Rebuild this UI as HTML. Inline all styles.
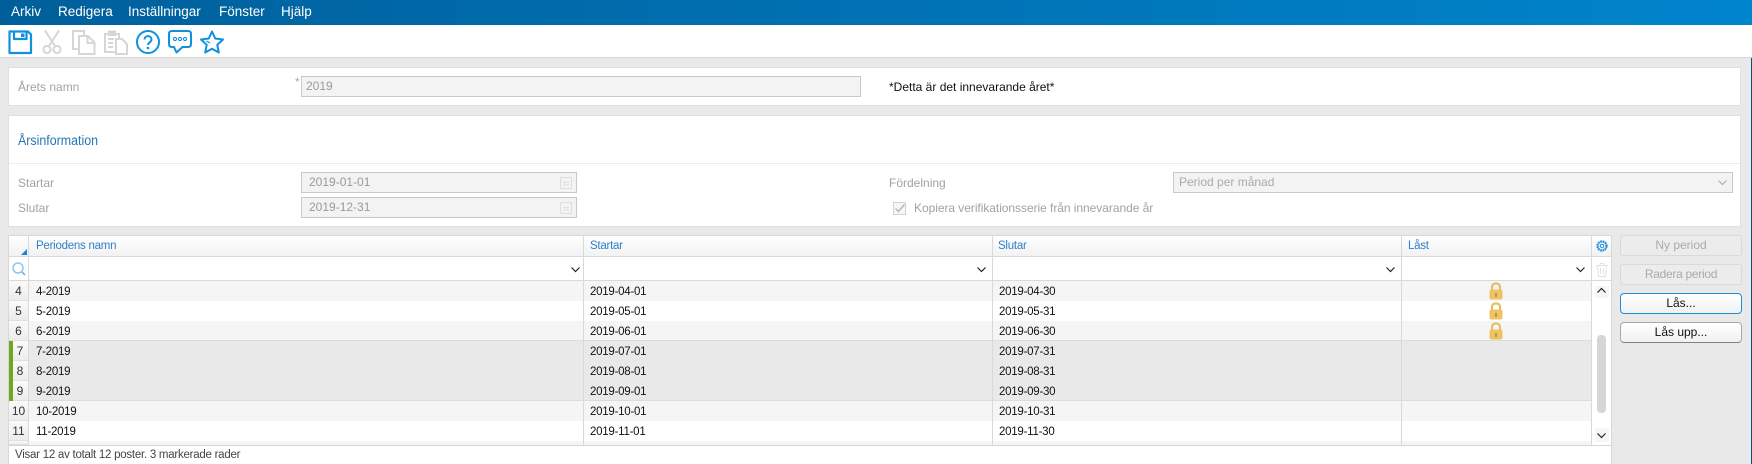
<!DOCTYPE html>
<html lang="sv"><head><meta charset="utf-8"><title>Årsinformation</title>
<style>
html,body{margin:0;padding:0}
body{width:1752px;height:464px;overflow:hidden;background:#e9e9e9;position:relative;font:12px/16px "Liberation Sans",sans-serif;color:#111}
.box{position:absolute;box-sizing:border-box}
.t{position:absolute;white-space:nowrap;line-height:16px}
.n{font-size:11.5px;letter-spacing:-.25px}
.lbl{color:#a2a2a2}
.inp{position:absolute;box-sizing:border-box;background:#f3f3f3;border:1px solid #c8c8c8;color:#9a9a9a;line-height:19px}
.btn{position:absolute;box-sizing:border-box;left:1620px;width:122px;height:21px;border-radius:3px;text-align:center;line-height:19px}
.off{background:#ececec;border:1px solid #d9d9d9;color:#aaa}
.on{background:linear-gradient(#fff,#f1f1f1);border:1px solid #a8a8a8;border-bottom-color:#808080;color:#111}
.rn{position:absolute;left:9px;width:19px;height:20px;box-sizing:border-box;background:linear-gradient(#fafafa,#ececec);text-align:center;line-height:21px;color:#333;border-bottom:1px solid #e0e0e0}
.row{position:absolute;left:29px;width:1562px;height:20px;font-size:11.5px;letter-spacing:-.25px}
.c{position:absolute;top:3px;white-space:nowrap}
.vl{position:absolute;width:1px;background:#d9d9d9}
svg{position:absolute;overflow:visible}
</style></head><body>

<div class="box" style="left:0;top:0;width:1752px;height:25px;background:linear-gradient(90deg,#005f9b,#0084cc)"></div>
<div class="t" style="left:11px;top:4px;color:#fff;font-size:13.5px">Arkiv</div>
<div class="t" style="left:58px;top:4px;color:#fff;font-size:13.5px">Redigera</div>
<div class="t" style="left:128px;top:4px;color:#fff;font-size:13.5px">Inställningar</div>
<div class="t" style="left:219px;top:4px;color:#fff;font-size:13.5px">Fönster</div>
<div class="t" style="left:281px;top:4px;color:#fff;font-size:13.5px">Hjälp</div>

<div class="box" style="left:0;top:25px;width:1752px;height:33px;background:#fff;border-bottom:1px solid #d8d8d8"></div>
<div class="box" style="left:1751px;top:58px;width:1px;height:406px;background:#0b4f7a"></div>

<!-- save -->
<svg style="left:8px;top:30px" width="24" height="24" viewBox="0 0 24 24" fill="none" stroke="#1190dd" stroke-width="2.2" stroke-linejoin="round"><path d="M1.500 1.500H20L23 4.500V23H1.500Z"/><path d="M6 1.500V9H18.500V1.500"/><path d="M13 3.500H16.500V7H13Z" fill="#1190dd" stroke="none"/></svg>
<!-- scissors -->
<svg style="left:42px;top:30px" width="20" height="24" viewBox="0 0 20 24" fill="none" stroke="#d6d6d6" stroke-width="2"><path d="M3 0.500L13 16M17 0.500L7 16"/><circle cx="5" cy="19.500" r="3.600"/><circle cx="15" cy="19.500" r="3.600"/></svg>
<!-- copy -->
<svg style="left:72px;top:30px" width="24" height="25" viewBox="0 0 24 25" fill="none" stroke="#d6d6d6" stroke-width="2"><path d="M1 1H12V19H1Z"/><path d="M7 6H16L22.500 12.500V24H7Z" fill="#fff"/><path d="M15.500 6V13H22.500"/></svg>
<!-- paste -->
<svg style="left:104px;top:30px" width="25" height="25" viewBox="0 0 25 25" fill="none" stroke="#d6d6d6" stroke-width="2"><path d="M1 4H15V22H1Z"/><path d="M5 1.500H11V5H5Z" fill="#d6d6d6"/><path d="M4 9H10M4 13H9M4 17H9"/><path d="M12 9H18L23 14V24H12Z" fill="#fff"/></svg>
<!-- help -->
<svg style="left:136px;top:30px" width="24" height="24" viewBox="0 0 24 24" fill="none" stroke="#1190dd"><circle cx="12" cy="12" r="11" stroke-width="2"/><path d="M8.500 9.500C8.500 5 15.500 5 15.500 9.500C15.500 12.300 12 12.500 12 15" stroke-width="2"/><circle cx="12" cy="18" r="1.300" fill="#1190dd" stroke="none"/></svg>
<!-- chat -->
<svg style="left:168px;top:30px" width="24" height="24" viewBox="0 0 24 24" fill="none" stroke="#1190dd" stroke-width="2" stroke-linejoin="round"><path d="M4 1H20Q23 1 23 4V14Q23 17 20 17H14.500L8.500 22.500L6 17H4Q1 17 1 14V4Q1 1 4 1Z"/><circle cx="7" cy="9" r="1.600" stroke-width="1.100"/><circle cx="12" cy="9" r="1.600" stroke-width="1.100"/><circle cx="17" cy="9" r="1.600" stroke-width="1.100"/></svg>
<!-- star -->
<svg style="left:200px;top:30px" width="24" height="24" viewBox="0 0 24 24" fill="none" stroke="#1190dd" stroke-width="2" stroke-linejoin="round"><path d="M12 1.500L15.200 8.500L23 9.500L17.300 14.800L18.800 22.500L12 18.700L5.200 22.500L6.700 14.800L1 9.500L8.800 8.500Z"/><path d="M6.500 11L10 13" stroke-width="1.200"/></svg>

<!-- panel 1 -->
<div class="box" style="left:8px;top:67px;width:1733px;height:39px;background:#fff;border:1px solid #e0e0e0"></div>
<div class="t lbl" style="left:18px;top:79px">Årets namn</div>
<div class="t" style="left:295px;top:74px;color:#aaa">*</div>
<div class="inp" style="left:301px;top:76px;width:560px;height:21px;padding-left:4px">2019</div>
<div class="t" style="left:889px;top:79px;color:#111">*Detta är det innevarande året*</div>

<!-- panel 2 -->
<div class="box" style="left:8px;top:115px;width:1733px;height:112px;background:#fff;border:1px solid #e0e0e0"></div>
<div class="box" style="left:9px;top:163px;width:1731px;height:1px;background:#ececec"></div>
<div class="t" style="left:18px;top:132px;font-size:13.5px;line-height:18px;color:#2676b4;transform:scaleX(.92);transform-origin:0 0">Årsinformation</div>
<div class="t lbl" style="left:18px;top:175px">Startar</div>
<div class="t lbl" style="left:18px;top:200px">Slutar</div>
<div class="inp" style="left:301px;top:172px;width:276px;height:21px;padding-left:7px">2019-01-01</div>
<div class="inp" style="left:301px;top:197px;width:276px;height:21px;padding-left:7px">2019-12-31</div>
<svg style="left:560px;top:176px" width="12" height="13" fill="none" stroke="#dedede"><path d="M.5 1.500H11.500V12.500H.5ZM3 6.500H9M3 9H9" /></svg>
<svg style="left:560px;top:201px" width="12" height="13" fill="none" stroke="#dedede"><path d="M.5 1.500H11.500V12.500H.5ZM3 6.500H9M3 9H9" /></svg>
<div class="t lbl" style="left:889px;top:175px">Fördelning</div>
<div class="inp" style="left:1173px;top:172px;width:560px;height:21px;padding-left:5px;color:#aaa">Period per månad</div>
<svg style="left:1718px;top:180px" width="9" height="6" fill="none" stroke="#a8a8a8" stroke-width="1"><path d="M.5 .5L4.500 4.500L8.500 .5"/></svg>
<div class="box" style="left:893px;top:202px;width:13px;height:13px;border:1px solid #d2d2d2;background:#f6f6f6"></div>
<svg style="left:895px;top:204px" width="10" height="9" fill="none" stroke="#b5b5b5" stroke-width="1.400"><path d="M.5 4.500L3.500 7.500L9.500 .5"/></svg>
<div class="t lbl" style="left:914px;top:200px;letter-spacing:-.05px">Kopiera verifikationsserie från innevarande år</div>

<!-- table -->
<div class="box" style="left:8px;top:235px;width:1604px;height:229px;background:#fff;border:1px solid #d8d8d8;border-bottom:none"></div>
<div class="box" style="left:9px;top:236px;width:1602px;height:20px;background:linear-gradient(#fff,#f2f2f2)"></div>
<div class="box" style="left:9px;top:256px;width:1602px;height:1px;background:#d9d9d9"></div>
<div class="box" style="left:9px;top:280px;width:1602px;height:1px;background:#d9d9d9"></div>
<svg style="left:21px;top:249px" width="6" height="6"><path d="M6 0V6H0Z" fill="#1a86d0"/></svg>
<div class="t n" style="left:36px;top:238px;color:#2f80c8">Periodens namn</div>
<div class="t n" style="left:590px;top:238px;color:#2f80c8">Startar</div>
<div class="t n" style="left:998px;top:238px;color:#2f80c8">Slutar</div>
<div class="t n" style="left:1408px;top:238px;color:#2f80c8">Låst</div>

<!-- gear -->
<svg style="left:1596px;top:240px" width="12" height="12" viewBox="0 0 12 12" fill="none" stroke="#1c8fdc"><circle cx="6" cy="6" r="4.500" stroke-width="2.200" stroke-dasharray="1.800 .6"/><circle cx="6" cy="6" r="1.800" stroke-width="1"/></svg>
<!-- search -->
<svg style="left:12px;top:262px" width="14" height="14" fill="none" stroke="#8fc8ef" stroke-width="1.500"><circle cx="6" cy="6" r="5"/><path d="M10 10L13 13" stroke="#5cb0e8"/></svg>
<!-- trash -->
<svg style="left:1596px;top:263px" width="12" height="14" fill="none" stroke="#e2e2e2" stroke-width="1"><path d="M0 2.500H12M4 2.500V.5H8V2.500M1.500 2.500L2.500 13.500H9.500L10.500 2.500M4.500 5V11M7.500 5V11"/></svg>
<!-- filter chevrons -->
<svg style="left:571px;top:267px" width="9" height="5" fill="none" stroke="#222" stroke-width="1.200"><path d="M.5 .5L4.500 4.500L8.500 .5"/></svg>
<svg style="left:977px;top:267px" width="9" height="5" fill="none" stroke="#222" stroke-width="1.200"><path d="M.5 .5L4.500 4.500L8.500 .5"/></svg>
<svg style="left:1386px;top:267px" width="9" height="5" fill="none" stroke="#222" stroke-width="1.200"><path d="M.5 .5L4.500 4.500L8.500 .5"/></svg>
<svg style="left:1576px;top:267px" width="9" height="5" fill="none" stroke="#222" stroke-width="1.200"><path d="M.5 .5L4.500 4.500L8.500 .5"/></svg>

<!-- rows -->
<div class="row" style="top:281px;background:#f5f5f5"><span class="c" style="left:7px">4-2019</span><span class="c" style="left:561px">2019-04-01</span><span class="c" style="left:970px">2019-04-30</span></div>
<div class="row" style="top:301px;background:#fff"><span class="c" style="left:7px">5-2019</span><span class="c" style="left:561px">2019-05-01</span><span class="c" style="left:970px">2019-05-31</span></div>
<div class="row" style="top:321px;background:#f5f5f5"><span class="c" style="left:7px">6-2019</span><span class="c" style="left:561px">2019-06-01</span><span class="c" style="left:970px">2019-06-30</span></div>
<div class="row" style="top:341px;background:#e9e9e9"><span class="c" style="left:7px">7-2019</span><span class="c" style="left:561px">2019-07-01</span><span class="c" style="left:970px">2019-07-31</span></div>
<div class="row" style="top:361px;background:#e9e9e9"><span class="c" style="left:7px">8-2019</span><span class="c" style="left:561px">2019-08-01</span><span class="c" style="left:970px">2019-08-31</span></div>
<div class="row" style="top:381px;background:#e9e9e9"><span class="c" style="left:7px">9-2019</span><span class="c" style="left:561px">2019-09-01</span><span class="c" style="left:970px">2019-09-30</span></div>
<div class="row" style="top:401px;background:#f5f5f5"><span class="c" style="left:7px">10-2019</span><span class="c" style="left:561px">2019-10-01</span><span class="c" style="left:970px">2019-10-31</span></div>
<div class="row" style="top:421px;background:#fff"><span class="c" style="left:7px">11-2019</span><span class="c" style="left:561px">2019-11-01</span><span class="c" style="left:970px">2019-11-30</span></div>
<div class="row" style="top:441px;height:4px;background:#f5f5f5"></div>
<div class="box" style="left:29px;top:340px;width:1562px;height:1px;background:#dcdcdc"></div>
<div class="box" style="left:29px;top:400px;width:1562px;height:1px;background:#dcdcdc"></div>

<div class="rn" style="top:281px">4</div>
<div class="rn" style="top:301px">5</div>
<div class="rn" style="top:321px">6</div>
<div class="rn" style="top:341px;padding-left:3px">7</div>
<div class="rn" style="top:361px;padding-left:3px">8</div>
<div class="rn" style="top:381px;padding-left:3px">9</div>
<div class="rn" style="top:401px">10</div>
<div class="rn" style="top:421px">11</div>
<div class="rn" style="top:441px;height:4px"></div>
<div class="box" style="left:9px;top:341px;width:4px;height:60px;background:#6fa81c"></div>

<div class="vl" style="left:28px;top:236px;height:209px"></div>
<div class="vl" style="left:583px;top:236px;height:209px"></div>
<div class="vl" style="left:992px;top:236px;height:209px"></div>
<div class="vl" style="left:1401px;top:236px;height:209px"></div>
<div class="vl" style="left:1591px;top:236px;height:209px"></div>

<!-- locks -->
<svg style="left:1489px;top:282px" width="14" height="18" viewBox="0 0 14 18"><path d="M3 8V5Q3 1.500 7 1.500T11 5V8" fill="none" stroke="#e6bb5c" stroke-width="2"/><rect x=".5" y="7.500" width="13" height="10" rx="2" fill="#efc263"/><rect x="6" y="11" width="2" height="4" fill="#b89a48"/></svg>
<svg style="left:1489px;top:302px" width="14" height="18" viewBox="0 0 14 18"><path d="M3 8V5Q3 1.500 7 1.500T11 5V8" fill="none" stroke="#e6bb5c" stroke-width="2"/><rect x=".5" y="7.500" width="13" height="10" rx="2" fill="#efc263"/><rect x="6" y="11" width="2" height="4" fill="#b89a48"/></svg>
<svg style="left:1489px;top:322px" width="14" height="18" viewBox="0 0 14 18"><path d="M3 8V5Q3 1.500 7 1.500T11 5V8" fill="none" stroke="#e6bb5c" stroke-width="2"/><rect x=".5" y="7.500" width="13" height="10" rx="2" fill="#efc263"/><rect x="6" y="11" width="2" height="4" fill="#b89a48"/></svg>

<!-- scrollbar -->
<div class="box" style="left:1595px;top:286px;width:14px;height:12px;background:#f6f6f6"></div>
<svg style="left:1597px;top:288px" width="9" height="5" fill="none" stroke="#222" stroke-width="1.200"><path d="M.5 4.500L4.500 .5L8.500 4.500"/></svg>
<div class="box" style="left:1597px;top:335px;width:9px;height:78px;background:#d6d6d6;border-radius:4px"></div>
<div class="box" style="left:1595px;top:428px;width:14px;height:14px;background:#f6f6f6"></div>
<svg style="left:1597px;top:433px" width="9" height="5" fill="none" stroke="#222" stroke-width="1.200"><path d="M.5 .5L4.500 4.500L8.500 .5"/></svg>

<!-- footer -->
<div class="box" style="left:9px;top:445px;width:1602px;height:1px;background:#d4d4d4"></div>
<div class="t n" style="left:15px;top:447px;color:#444">Visar 12 av totalt 12 poster. 3 markerade rader</div>

<!-- buttons -->
<div class="btn off" style="top:235px">Ny period</div>
<div class="btn off" style="top:264px;letter-spacing:-.3px">Radera period</div>
<div class="btn on" style="top:293px;border:1px solid #1a90dc;border-radius:4px">Lås...</div>
<div class="btn on" style="top:322px;border-radius:4px">Lås upp...</div>
</body></html>
